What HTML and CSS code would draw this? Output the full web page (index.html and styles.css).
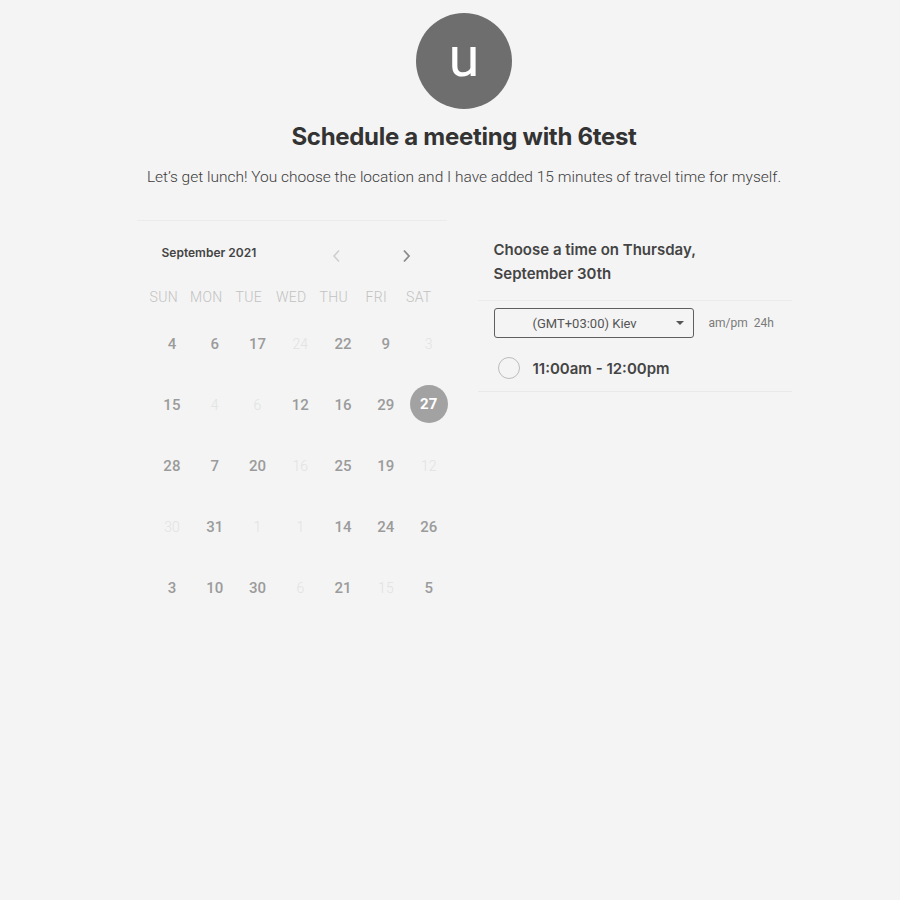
FILE: index.html
```html
<!DOCTYPE html>
<html lang="en">
<head>
<meta charset="utf-8">
<title>Schedule a meeting with 6test</title>
<link rel="stylesheet" href="styles.css">
</head>
<body>
<div class="page">
  <div class="avatar">u</div>
  <h1 class="title">Schedule a meeting with 6test</h1>
  <p class="subtitle">Let’s get lunch! You choose the location and I have added 15 minutes of travel time for myself.</p>

  <div class="panels">
    <section class="cal">
      <div class="cal-head">
        <span class="month">September 2021</span>
        <span class="nav prev"><svg width="9" height="14" viewBox="0 0 9 14"><path d="M7 1.5 L2 7 L7 12.5" fill="none" stroke="#cfcfcf" stroke-width="1.6"/></svg></span>
        <span class="nav next"><svg width="9" height="14" viewBox="0 0 9 14"><path d="M2 1.5 L7 7 L2 12.5" fill="none" stroke="#8a8a8a" stroke-width="1.8"/></svg></span>
      </div>
      <div class="dow">
        <span>SUN</span><span>MON</span><span>TUE</span><span>WED</span><span>THU</span><span>FRI</span><span>SAT</span>
      </div>
      <div class="days">
        <span class="d">4</span><span class="d">6</span><span class="d">17</span><span class="d off">24</span><span class="d">22</span><span class="d">9</span><span class="d off">3</span>
        <span class="d">15</span><span class="d off">4</span><span class="d off">6</span><span class="d">12</span><span class="d">16</span><span class="d">29</span><span class="d"><span class="sel">27</span></span>
        <span class="d">28</span><span class="d">7</span><span class="d">20</span><span class="d off">16</span><span class="d">25</span><span class="d">19</span><span class="d off">12</span>
        <span class="d off">30</span><span class="d">31</span><span class="d off">1</span><span class="d off">1</span><span class="d">14</span><span class="d">24</span><span class="d">26</span>
        <span class="d">3</span><span class="d">10</span><span class="d">30</span><span class="d off">6</span><span class="d">21</span><span class="d off">15</span><span class="d">5</span>
      </div>
    </section>

    <section class="times">
      <div class="times-head">Choose a time on Thursday,<br>September 30th</div>
      <div class="tz-row">
        <div class="tz-select">
          <span class="tz-text">(GMT+03:00) Kiev</span>
          <svg class="caret" width="8" height="4" viewBox="0 0 8 4"><path d="M0 0 H8 L4 4 Z" fill="#555"/></svg>
        </div>
        <span class="fmt">am/pm&nbsp;&nbsp;24h</span>
      </div>
      <div class="slot">
        <span class="radio"></span>
        <span class="slot-text">11:00am - 12:00pm</span>
      </div>
    </section>
  </div>
</div>
</body>
</html>
```

FILE: styles.css
```css
html, body {
  margin: 0;
  padding: 0;
  background: #f4f4f4;
}

.page {
  width: 900px;
  box-sizing: border-box;
  padding: 13px 0 0 28px;
  display: flex;
  flex-direction: column;
  align-items: center;
  font-family: Roboto, "Liberation Sans", sans-serif;
}

.avatar {
  width: 96px;
  height: 96px;
  border-radius: 50%;
  background: #6e6e6e;
  color: #fff;
  font-family: Roboto, sans-serif;
  font-size: 56px;
  line-height: 88px;
  text-align: center;
}

.title {
  margin: 13px 0 0;
  font-family: Inter, "Liberation Sans", sans-serif;
  font-weight: 700;
  font-size: 24px;
  line-height: 30px;
  color: #333;
  letter-spacing: -0.3px;
}

.subtitle {
  margin: 15px 0 0;
  font-family: Roboto, sans-serif;
  font-weight: 300;
  font-size: 15.5px;
  line-height: 20px;
  color: #3c3c3c;
}

.panels {
  margin-top: 33px;
  display: flex;
  gap: 31px;
  align-items: flex-start;
}

/* calendar */
.cal {
  width: 310px;
  border-top: 1px solid #ebebeb;
}

.cal-head {
  height: 62px;
  display: flex;
  align-items: center;
  padding-left: 25px;
}

.month {
  font-family: Inter, sans-serif;
  font-weight: 600;
  font-size: 12px;
  color: #444;
  width: 170px;
}

.nav {
  display: flex;
  align-items: center;
  height: 14px;
  margin-top: 7px;
}

.prev {
  margin-left: 0;
}

.next {
  margin-left: 61px;
}

.dow {
  margin-top: 4px;
  padding-left: 6px;
  display: grid;
  grid-template-columns: repeat(7, 42.5px);
  height: 20px;
  align-items: center;
}

.dow span {
  text-align: center;
  font-weight: 300;
  font-size: 14px;
  color: #c2c2c2;
  letter-spacing: 0.3px;
}

.days {
  margin-top: 6px;
  padding-left: 14px;
  display: grid;
  grid-template-columns: repeat(7, 42.8px);
  grid-auto-rows: 61px;
}

.d {
  display: flex;
  align-items: center;
  justify-content: center;
  font-weight: 500;
  font-size: 15px;
  color: #9b9b9b;
}

.d.off {
  font-weight: 300;
  font-size: 14px;
  color: #e2e2e2;
}

.sel {
  width: 38px;
  height: 38px;
  border-radius: 50%;
  background: #a2a2a2;
  color: #fff;
  font-weight: 700;
  display: flex;
  align-items: center;
  justify-content: center;
  margin-top: -2px;
}

/* times */
.times {
  width: 314px;
}

.times-head {
  padding: 18px 16px 14px;
  border-bottom: 1px solid #ebebeb;
  font-family: Inter, sans-serif;
  font-weight: 600;
  font-size: 15px;
  line-height: 24px;
  color: #444;
}

.tz-row {
  margin-top: 7px;
  padding-left: 16px;
  display: flex;
  align-items: center;
  gap: 15px;
}

.tz-select {
  width: 200px;
  height: 30px;
  box-sizing: border-box;
  border: 1px solid #5f5f5f;
  border-radius: 3px;
  display: flex;
  align-items: center;
  padding-left: 38px;
  padding-right: 9px;
}

.tz-text {
  flex: 1;
  font-size: 13px;
  color: #555;
}

.fmt {
  font-size: 12px;
  color: #7a7a7a;
}

.slot {
  margin-top: 7px;
  height: 46px;
  border-bottom: 1px solid #e9e9e9;
  display: flex;
  align-items: center;
  padding-left: 20px;
  gap: 13px;
}

.radio {
  width: 22px;
  height: 22px;
  box-sizing: border-box;
  border: 1.5px solid #bcbcbc;
  border-radius: 50%;
}

.slot-text {
  font-family: Inter, sans-serif;
  font-weight: 600;
  font-size: 15px;
  color: #444;
}
```
